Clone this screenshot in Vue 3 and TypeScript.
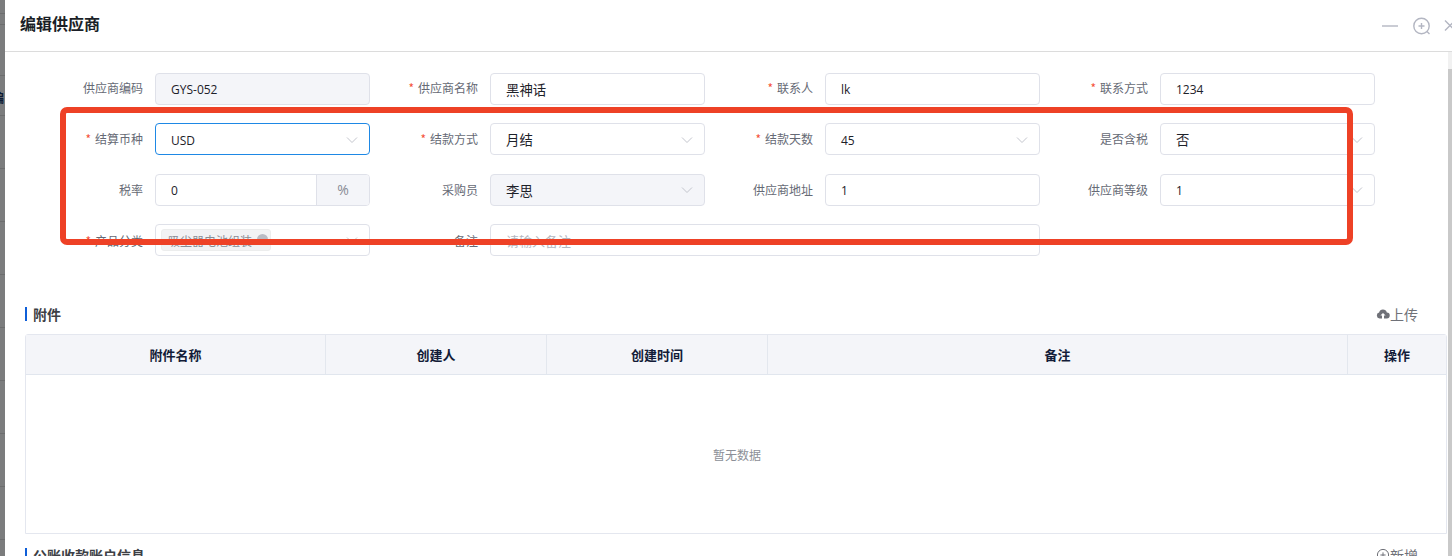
<script setup lang="ts">
interface Field {
  label: string
  value?: string
  placeholder?: string
  required?: boolean
  kind: 'input' | 'select' | 'unit' | 'tags' | 'wide'
  state?: 'disabled' | 'focus'
}

const fields: Field[] = [
  { label: '供应商编码', value: 'GYS-052', kind: 'input', state: 'disabled' },
  { label: '供应商名称', value: '黑神话', kind: 'input', required: true },
  { label: '联系人', value: 'lk', kind: 'input', required: true },
  { label: '联系方式', value: '1234', kind: 'input', required: true },
  { label: '结算币种', value: 'USD', kind: 'select', required: true, state: 'focus' },
  { label: '结款方式', value: '月结', kind: 'select', required: true },
  { label: '结款天数', value: '45', kind: 'select', required: true },
  { label: '是否含税', value: '否', kind: 'select' },
  { label: '税率', value: '0', kind: 'unit' },
  { label: '采购员', value: '李思', kind: 'select', state: 'disabled' },
  { label: '供应商地址', value: '1', kind: 'input' },
  { label: '供应商等级', value: '1', kind: 'select' },
  { label: '产品分类', value: '吸尘器电池组装', kind: 'tags', required: true },
  { label: '备注', placeholder: '请输入备注', kind: 'wide' }
]

const columns = ['附件名称', '创建人', '创建时间', '备注', '操作']

const isCjk = (text?: string): boolean => !!text && /[^\x00-\x7f]/.test(text)
</script>

<template>
  <div class="screen">
    <div class="backdrop"><span class="peek">编</span></div>
    <div class="modal">
      <header class="modal-head">
        <h1>编辑供应商</h1>
        <div class="win-tools">
          <svg width="18" height="18" viewBox="0 0 18 18"><path d="M1 9h16" /></svg>
          <svg width="20" height="20" viewBox="0 0 20 20"><circle cx="10.5" cy="10" r="7.7" /><path d="M7.5 10h6M10.5 7v6M16 15.5l2.5 2.5" /></svg>
          <svg width="14" height="14" viewBox="0 0 14 14"><path d="M2 1.5l10 10M12 1.5L2 11.5" /></svg>
        </div>
      </header>
      <div class="modal-body">
        <form class="form-grid" @submit.prevent>
          <div v-for="f in fields" :key="f.label" class="field" :class="{ wide: f.kind === 'wide' }">
            <label class="label"><i v-if="f.required">*</i>{{ f.label }}</label>
            <div class="control" :class="[f.state, 'kind-' + f.kind]">
              <template v-if="f.kind === 'unit'">
                <span class="val">{{ f.value }}</span>
                <span class="addon">%</span>
              </template>
              <template v-else-if="f.kind === 'tags'">
                <span class="tag"><span class="tag-text">{{ f.value }}</span><b class="tag-x"></b></span>
                <svg class="chev" width="12" height="12" viewBox="0 0 12 12"><path d="M1 3.5l5 5 5-5" /></svg>
              </template>
              <template v-else>
                <span v-if="f.value" class="val" :class="{ cjk: isCjk(f.value) }">{{ f.value }}</span>
                <span v-else class="ph">{{ f.placeholder }}</span>
                <svg v-if="f.kind === 'select'" class="chev" width="12" height="12" viewBox="0 0 12 12"><path d="M1 3.5l5 5 5-5" /></svg>
              </template>
            </div>
          </div>
        </form>

        <section class="section attach">
          <div class="sec-head">
            <h2>附件</h2>
            <a class="sec-action">
              <svg width="14" height="14" viewBox="0 0 14 14"><path class="fill" d="M3.6 11.5a3 3 0 0 1-.5-5.9 4 4 0 0 1 7.7-.2 3 3 0 0 1-.2 6.1H8V8.6h1.6L7 6 4.4 8.6H6v2.9z" /></svg>上传
            </a>
          </div>
          <div class="table">
            <div class="thead">
              <div v-for="c in columns" :key="c" class="th">{{ c }}</div>
            </div>
            <div class="tbody">暂无数据</div>
          </div>
        </section>

        <section class="section account">
          <div class="sec-head">
            <h2>公账收款账户信息</h2>
            <a class="sec-action">
              <svg width="14" height="14" viewBox="0 0 14 14"><circle cx="7" cy="7" r="5.6" /><path d="M4.4 7h5.2M7 4.4v5.2" /></svg>新增
            </a>
          </div>
        </section>
      </div>
      <div class="scrollbar"><div class="thumb"></div></div>
    </div>
    <div class="annotation"></div>
  </div>
</template>

<style>
html, body { margin: 0; background: #fff; }
</style>

<style scoped>
.screen {
  position: relative;
  display: flex;
  width: 1452px;
  height: 556px;
  overflow: hidden;
  font-family: "Noto Sans CJK SC", "Noto Sans", sans-serif;
  font-size: 12px;
  color: #1d2129;
}
.backdrop {
  position: relative;
  flex: 0 0 5px;
  overflow: hidden;
  background:
    linear-gradient(#6c6d6e, #6c6d6e) 0 13px / 100% 1px no-repeat,
    linear-gradient(#6c6d6e, #6c6d6e) 0 24px / 100% 1px no-repeat,
    linear-gradient(#6c6d6e, #6c6d6e) 0 75px / 100% 1px no-repeat,
    repeating-linear-gradient(180deg, #6c6d6e 0 1px, transparent 1px 53px) 0 115px / 100% 441px no-repeat,
    #7b7c7d;
}
.peek {
  position: absolute;
  left: -8px;
  top: 89px;
  font-size: 12px;
  font-weight: 700;
  color: #0c1a33;
}
.modal {
  position: relative;
  flex: 1;
  min-width: 0;
  display: flex;
  flex-direction: column;
  background: #fff;
}
.modal-head {
  flex: 0 0 52px;
  box-sizing: border-box;
  display: flex;
  align-items: center;
  justify-content: space-between;
  padding: 0 0 5px 15px;
  border-bottom: 1px solid #dcdcdc;
}
h1 {
  margin: 0;
  font-size: 16px;
  font-weight: 700;
  line-height: 24px;
  color: #1b1f27;
}
.win-tools {
  display: flex;
  align-items: center;
  gap: 12px;
  margin-right: -5px;
  padding-top: 5px;
}
.win-tools svg { flex: none; fill: none; stroke: #b3b6c2; stroke-width: 1.4; }
.modal-body { flex: 1; min-height: 0; overflow: hidden; padding: 21px 0 0 20px; }
.form-grid {
  display: grid;
  grid-template-columns: repeat(4, 215px);
  column-gap: 120px;
  row-gap: 18.33px;
  margin-left: 130px;
  width: 1220px;
  height: 183px;
}
.field { position: relative; height: 32px; }
.field.wide { grid-column: span 2; }
.label {
  position: absolute;
  right: 100%;
  top: 0;
  margin-right: 12px;
  white-space: nowrap;
  line-height: 30px;
  color: #666a75;
}
.field:nth-child(n + 5) .label { line-height: 32px; }
.field:nth-child(n + 13) .label { line-height: 34px; }
.label i {
  font-style: normal;
  color: #f5523a;
  margin-right: 4px;
}
.control {
  box-sizing: border-box;
  display: flex;
  align-items: center;
  height: 32px;
  padding: 0 11px 0 15px;
  border: 1px solid #dfe1e9;
  border-radius: 4px;
  background: #fff;
  line-height: 30px;
  color: #1d2129;
  font-family: "Open Sans", "Noto Sans CJK SC", sans-serif;
}
.control.disabled { background: #f4f5f9; }
.control.focus { border-color: #1e88e5; }
.control.kind-unit { padding: 0 0 0 15px; }
.control.kind-tags { padding-left: 5px; color: #8a8d96; }
.val { flex: 1; min-width: 0; padding-top: 1.4px; }
.field:nth-child(n + 5) .val:not(.cjk) { padding-top: 3px; }
.val.cjk { padding-top: 0; font-size: 13.4px; font-family: "Noto Sans CJK SC", sans-serif; }
.ph { flex: 1; padding-top: 3px; font-size: 13px; color: #b4b7c0; font-family: "Noto Sans CJK SC", sans-serif; }
.addon {
  flex: 0 0 52px;
  align-self: stretch;
  text-align: center;
  border-left: 1px solid #dfe1e9;
  background: #f4f5f9;
  color: #888c96;
  font-size: 14px;
  border-radius: 0 3px 3px 0;
}
.tag {
  display: inline-flex;
  align-items: center;
  height: 20px;
  padding: 0 2px 0 6px;
  gap: 5px;
  border: 1px solid #eceded;
  border-radius: 3px;
  background: #f2f2f4;
  line-height: 18px;
  font-family: "Noto Sans CJK SC", sans-serif;
}
.tag-text { padding-top: 2px; }
.tag-x {
  width: 11px;
  height: 11px;
  border-radius: 50%;
  background: #b9bbc4;
}
.chev {
  flex: none;
  margin-left: auto;
  margin-top: 1px;
  fill: none;
  stroke: #c3c5cd;
  stroke-width: 1;
}
.section { width: 1422px; }
.attach { margin-top: 51px; }
.account { margin-top: 14px; }
.sec-head {
  display: flex;
  align-items: center;
  justify-content: space-between;
  height: 14px;
  padding-left: 6px;
  border-left: 2px solid #0f5fd8;
}
h2 {
  margin: 0;
  font-size: 14px;
  font-weight: 700;
  line-height: 16px;
  color: #3d3f45;
}
.sec-action {
  display: flex;
  align-items: center;
  margin-right: 29px;
  font-size: 14px;
  line-height: 14px;
  color: #6f7178;
}
.sec-action svg { fill: none; stroke: #6f7178; stroke-width: 1; }
.sec-action svg .fill { fill: #6f7178; stroke: none; }
.table {
  box-sizing: border-box;
  margin-top: 13px;
  height: 200px;
  border: 1px solid #e4e7ef;
  border-radius: 3px 3px 0 0;
  display: flex;
  flex-direction: column;
}
.thead {
  display: grid;
  grid-template-columns: 300px 221px 221px 580px 1fr;
  height: 40px;
  flex: none;
  box-sizing: border-box;
  background: #f4f5f9;
  border-bottom: 1px solid #e1e6ee;
}
.th {
  display: flex;
  align-items: center;
  justify-content: center;
  font-size: 13px;
  font-weight: 700;
  color: #131c38;
  border-right: 1px solid #e3e7ee;
}
.th:last-child { border-right: 0; }
.tbody {
  flex: 1;
  display: flex;
  align-items: center;
  justify-content: center;
  padding-left: 2px;
  color: #8c8f97;
}
.scrollbar {
  position: absolute;
  top: 52px;
  right: 0;
  bottom: 0;
  width: 4px;
  background: #f1f1f1;
}
.thumb {
  position: absolute;
  top: 17px;
  left: 0;
  right: 0;
  bottom: 0;
  background: #c9c9c9;
}
.annotation {
  position: absolute;
  left: 60px;
  top: 107px;
  width: 1293px;
  height: 138px;
  box-sizing: border-box;
  border: 6px solid #ee4126;
  border-radius: 7px;
  pointer-events: none;
}
</style>
